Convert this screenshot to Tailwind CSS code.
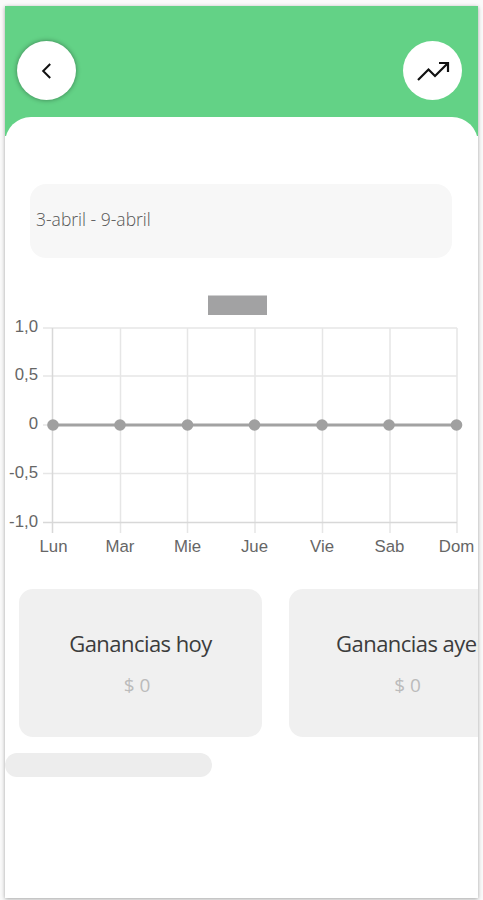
<!DOCTYPE html>
<html lang="es">
<head>
    <meta charset="UTF-8">
    <meta name="viewport" content="width=device-width, initial-scale=1.0">
    <title>Ganancias</title>
    <script src="https://cdn.jsdelivr.net/npm/@tailwindcss/browser@4"></script>
</head>
<body class="bg-[#fafafa] h-screen overflow-hidden pt-[6px] pl-[5px] font-['Open_Sans',sans-serif]">
    <div class="w-[473px] h-[892px] bg-white overflow-hidden shadow-[0_1px_4px_rgba(0,0,0,0.35)]">
        <!-- Header -->
        <header class="h-[130px] bg-[#63d286] flex justify-between items-start pt-[35px] pl-3 pr-4">
            <button class="size-[59px] rounded-full bg-white flex items-center justify-center shadow-[0_0_5px_rgba(0,0,0,0.4)]">
                <svg class="w-5 h-5" viewBox="0 0 20 20" fill="none" stroke="#111" stroke-width="2">
                    <path d="M13.200 3L6.200 10l7 7" />
                </svg>
            </button>
            <button class="size-[59px] rounded-full bg-white flex items-center justify-center">
                <svg class="w-[34px] h-6" viewBox="0 0 34 24" fill="none" stroke="#111" stroke-width="2.200">
                    <path d="M2 21L12.500 10.500L19 17L31.500 4.500M23 4H32V13" />
                </svg>
            </button>
        </header>

        <main class="relative -mt-[19.500px] h-[781.500px] bg-white rounded-t-[26px] overflow-hidden">
            <!-- Date range -->
            <div class="pt-[67px] pl-[25px]">
                <div class="w-[422px] h-[74.500px] rounded-2xl bg-[#f7f7f7] pl-[6px] flex items-center">
                    <span class="text-[17.500px] font-light text-[#555] -mt-1 whitespace-nowrap">3-abril - 9-abril</span>
                </div>
            </div>

            <!-- Weekly chart -->
            <svg class="block mt-[27px] w-[473px] h-[285px]" viewBox="5 285 473 285" font-family="Liberation Sans, Arial, sans-serif" font-size="16.800" fill="#666">
                <rect x="208" y="295.500" width="59" height="19.500" fill="#a2a2a3" />
                <g stroke="#e6e6e6" stroke-width="1.500">
                    <path d="M43 328H457M43 376H457M43 425H457M43 473.500H457" />
                    <path d="M120.500 328V533M187.500 328V533M255 328V533M322.500 328V533M390 328V533M457 328V533" />
                    <path d="M43 522.500H457M52.500 328V533" stroke="#d8d8d8" />
                </g>
                <path d="M53 425H457" stroke="#a2a2a2" stroke-width="2.800" />
                <g fill="#a0a0a0">
                    <circle cx="53" cy="425" r="5.800" />
                    <circle cx="120" cy="425" r="5.800" />
                    <circle cx="187.500" cy="425" r="5.800" />
                    <circle cx="254.500" cy="425" r="5.800" />
                    <circle cx="322" cy="425" r="5.800" />
                    <circle cx="389" cy="425" r="5.800" />
                    <circle cx="456.500" cy="425" r="5.800" />
                </g>
                <g text-anchor="end">
                    <text x="38" y="331.500">1,0</text>
                    <text x="38" y="380">0,5</text>
                    <text x="38" y="429">0</text>
                    <text x="38" y="478">-0,5</text>
                    <text x="38" y="527">-1,0</text>
                </g>
                <g text-anchor="middle">
                    <text x="53.500" y="552">Lun</text>
                    <text x="120" y="552">Mar</text>
                    <text x="187.500" y="552">Mie</text>
                    <text x="254.500" y="552">Jue</text>
                    <text x="322" y="552">Vie</text>
                    <text x="389.500" y="552">Sab</text>
                    <text x="456.500" y="552">Dom</text>
                </g>
            </svg>

            <!-- Earnings -->
            <section class="mt-[19px] ml-[14px] flex gap-[27px]">
                <div class="w-[243px] h-[148px] shrink-0 rounded-[14px] bg-[#f0f0f0] flex flex-col items-center pt-[38px]">
                    <h2 class="text-[22px] leading-8 tracking-[-0.550px] text-[#3c3c3c] whitespace-nowrap">Ganancias hoy</h2>
                    <p class="mt-3 -ml-[7px] text-[19px] leading-7 text-[#bbb]">$ 0</p>
                </div>
                <div class="w-[243px] h-[148px] shrink-0 rounded-[14px] bg-[#f0f0f0] flex flex-col items-center pt-[38px]">
                    <h2 class="text-[22px] leading-8 tracking-[-0.550px] text-[#3c3c3c] whitespace-nowrap">Ganancias ayer</h2>
                    <p class="mt-3 -ml-[6px] text-[19px] leading-7 text-[#bbb]">$ 0</p>
                </div>
            </section>
            <div class="mt-[16px] w-[207px] h-6 rounded-full bg-[#ededed]"></div>
        </main>
    </div>
</body>
</html>
